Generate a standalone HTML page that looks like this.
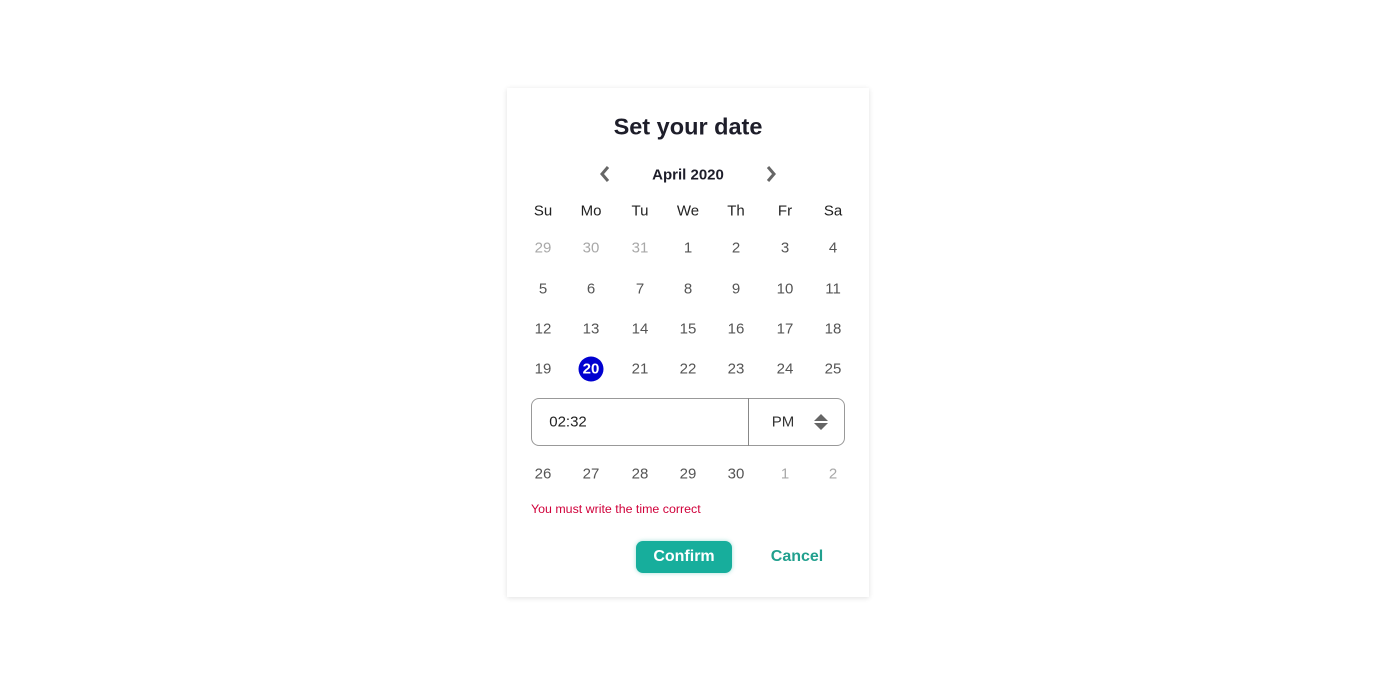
<!DOCTYPE html>
<html><head><meta charset="utf-8"><style>
*{margin:0;padding:0;box-sizing:border-box}
body{width:1376px;height:691px;background:#fff;font-family:"Liberation Sans",sans-serif;position:relative;overflow:hidden}
.card{position:absolute;left:507px;top:88px;width:362px;height:509px;background:#fff;box-shadow:0 1px 5px rgba(0,0,0,.12)}
.a{position:absolute;transform:translate(-50%,-50%);white-space:nowrap}
.d{font-size:15px;color:#555}
.g{color:#a8a8a8}
.h{font-size:15px;color:#222}
</style></head><body>
<div class="card"></div>
<div class="a" style="left:688px;top:127px;font-size:23.5px;font-weight:bold;color:#1e1e2a">Set your date</div>
<div class="a" style="left:688px;top:175px;font-size:15px;font-weight:bold;color:#1e1e2a">April 2020</div>
<svg class="a" style="left:605px;top:174px" width="12" height="18" viewBox="0 0 12 18"><path d="M9 2 L3 9 L9 16" stroke="#666" stroke-width="3" fill="none"/></svg>
<svg class="a" style="left:771px;top:174px" width="12" height="18" viewBox="0 0 12 18"><path d="M3 2 L9 9 L3 16" stroke="#666" stroke-width="3" fill="none"/></svg>
<div class="a h" style="left:543px;top:211px">Su</div>
<div class="a h" style="left:591px;top:211px">Mo</div>
<div class="a h" style="left:640px;top:211px">Tu</div>
<div class="a h" style="left:688px;top:211px">We</div>
<div class="a h" style="left:736px;top:211px">Th</div>
<div class="a h" style="left:785px;top:211px">Fr</div>
<div class="a h" style="left:833px;top:211px">Sa</div>

<div class="a d g" style="left:543px;top:248px">29</div>
<div class="a d g" style="left:591px;top:248px">30</div>
<div class="a d g" style="left:640px;top:248px">31</div>
<div class="a d" style="left:688px;top:248px">1</div>
<div class="a d" style="left:736px;top:248px">2</div>
<div class="a d" style="left:785px;top:248px">3</div>
<div class="a d" style="left:833px;top:248px">4</div>

<div class="a d" style="left:543px;top:289px">5</div>
<div class="a d" style="left:591px;top:289px">6</div>
<div class="a d" style="left:640px;top:289px">7</div>
<div class="a d" style="left:688px;top:289px">8</div>
<div class="a d" style="left:736px;top:289px">9</div>
<div class="a d" style="left:785px;top:289px">10</div>
<div class="a d" style="left:833px;top:289px">11</div>

<div class="a d" style="left:543px;top:329px">12</div>
<div class="a d" style="left:591px;top:329px">13</div>
<div class="a d" style="left:640px;top:329px">14</div>
<div class="a d" style="left:688px;top:329px">15</div>
<div class="a d" style="left:736px;top:329px">16</div>
<div class="a d" style="left:785px;top:329px">17</div>
<div class="a d" style="left:833px;top:329px">18</div>

<div class="a d" style="left:543px;top:369px">19</div>
<div class="a" style="left:591px;top:369px;width:25px;height:25px;border-radius:50%;background:#0000d0;color:#fff;font-size:15px;font-weight:bold;line-height:25px;text-align:center">20</div>
<div class="a d" style="left:640px;top:369px">21</div>
<div class="a d" style="left:688px;top:369px">22</div>
<div class="a d" style="left:736px;top:369px">23</div>
<div class="a d" style="left:785px;top:369px">24</div>
<div class="a d" style="left:833px;top:369px">25</div>

<div style="position:absolute;left:531px;top:398px;width:314px;height:48px;border:1px solid #999;border-radius:8px;background:#fff"></div>
<div style="position:absolute;left:748px;top:398px;width:1px;height:48px;background:#888"></div>
<div class="a" style="left:568px;top:422px;font-size:15px;color:#222">02:32</div>
<div class="a" style="left:783px;top:422px;font-size:15px;color:#333">PM</div>
<svg class="a" style="left:821px;top:422px" width="16" height="18" viewBox="0 0 16 18"><path d="M8 1 L15 8 H1Z M8 17 L15 10 H1Z" fill="#666"/></svg>

<div class="a d" style="left:543px;top:474px">26</div>
<div class="a d" style="left:591px;top:474px">27</div>
<div class="a d" style="left:640px;top:474px">28</div>
<div class="a d" style="left:688px;top:474px">29</div>
<div class="a d" style="left:736px;top:474px">30</div>
<div class="a d g" style="left:785px;top:474px">1</div>
<div class="a d g" style="left:833px;top:474px">2</div>

<div style="position:absolute;left:531px;top:502px;font-size:12.4px;color:#d0003a">You must write the time correct</div>
<div style="position:absolute;left:636px;top:541px;width:96px;height:32px;border-radius:7px;background:#17ae9c;color:#fff;font-weight:bold;font-size:16px;line-height:32px;text-align:center;box-shadow:0 0 4px rgba(23,174,156,.4)">Confirm</div>
<div class="a" style="left:797px;top:557px;font-size:16px;font-weight:bold;color:#21a08e">Cancel</div>
</body></html>
